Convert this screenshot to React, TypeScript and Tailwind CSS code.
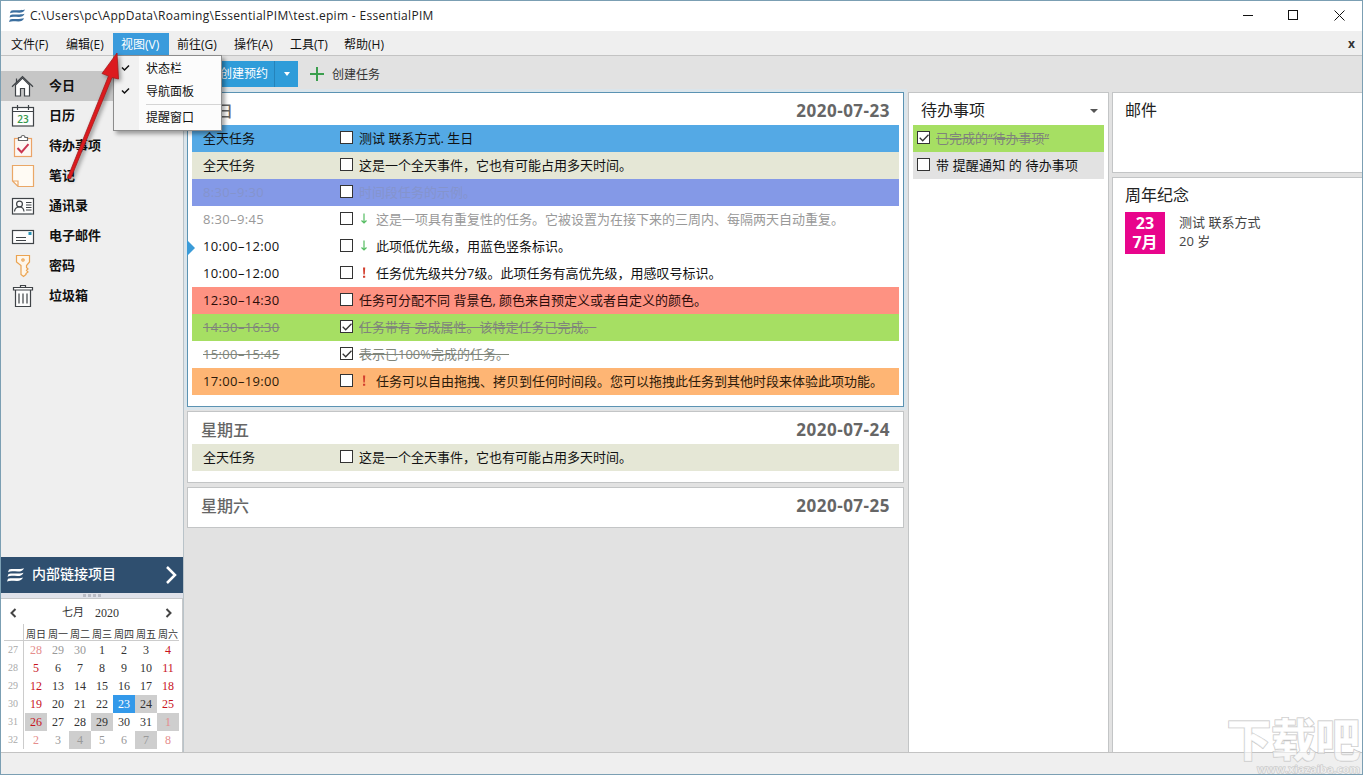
import type { ReactNode } from 'react'
import clsx from 'clsx'

type Priority = 'low' | 'high'

interface Task {
  time: string
  text: string
  bg?: string
  color?: string
  done?: boolean
  priority?: Priority
}

const todayTasks: Task[] = [
  { time: '全天任务', text: '测试 联系方式. 生日', bg: 'bg-[#54a9e5]' },
  { time: '全天任务', text: '这是一个全天事件，它也有可能占用多天时间。', bg: 'bg-[#e5e7d6]' },
  { time: '8:30–9:30', text: '时间段任务的示例。', bg: 'bg-[#8499e7]', color: 'text-[#8494cd]' },
  { time: '8:30–9:45', text: '这是一项具有重复性的任务。它被设置为在接下来的三周内、每隔两天自动重复。', color: 'text-[#999999]', priority: 'low' },
  { time: '10:00–12:00', text: '此项低优先级，用蓝色竖条标识。', priority: 'low' },
  { time: '10:00–12:00', text: '任务优先级共分7级。此项任务有高优先级，用感叹号标识。', priority: 'high' },
  { time: '12:30–14:30', text: '任务可分配不同 背景色, 颜色来自预定义或者自定义的颜色。', bg: 'bg-[#fe9282]', color: 'text-[#2c0d0a]' },
  { time: '14:30–16:30', text: '任务带有 完成属性。该特定任务已完成。', bg: 'bg-[#a6df63]', done: true },
  { time: '15:00–15:45', text: '表示已100%完成的任务。', done: true },
  { time: '17:00–19:00', text: '任务可以自由拖拽、拷贝到任何时间段。您可以拖拽此任务到其他时段来体验此项功能。', bg: 'bg-[#feb574]', color: 'text-[#2c1a0a]', priority: 'high' },
]

const fridayTasks: Task[] = [
  { time: '全天任务', text: '这是一个全天事件，它也有可能占用多天时间。', bg: 'bg-[#e5e7d6]' },
]

const menus = [
  { label: '文件(F)', width: 'w-[55px]' },
  { label: '编辑(E)', width: 'w-[55px]' },
  { label: '视图(V)', width: 'w-[56px]', active: true },
  { label: '前往(G)', width: 'w-[57px]' },
  { label: '操作(A)', width: 'w-[56px]' },
  { label: '工具(T)', width: 'w-[54px]' },
  { label: '帮助(H)', width: 'w-[56px]' },
]

const weekdays = ['周日', '周一', '周二', '周三', '周四', '周五', '周六']

const weeks = [
  { no: 27, days: [28, 29, 30, 1, 2, 3, 4] },
  { no: 28, days: [5, 6, 7, 8, 9, 10, 11] },
  { no: 29, days: [12, 13, 14, 15, 16, 17, 18] },
  { no: 30, days: [19, 20, 21, 22, 23, 24, 25] },
  { no: 31, days: [26, 27, 28, 29, 30, 31, 1] },
  { no: 32, days: [2, 3, 4, 5, 6, 7, 8] },
]

// week-day indexes of the days that hold events
const marked = ['3-5', '4-0', '4-3', '4-6', '5-2', '5-5']

function Icon({ children, color = '#3f4347' }: { children: ReactNode; color?: string }) {
  return (
    <svg width="24" height="24" viewBox="0 0 24 24" fill="none" stroke={color} strokeWidth="1.2" className="shrink-0">
      {children}
    </svg>
  )
}

const navItems: { label: string; icon: ReactNode }[] = [
  {
    label: '今日',
    icon: (
      <Icon>
        <path d="M4.500 11v11h5v-7.500h4v7.500h5V11L11.500 4z" fill="#fff" />
        <path d="M1 12.800 11.500 2.600 22 12.800" />
        <path d="M5.500 8V4.500" />
      </Icon>
    ),
  },
  {
    label: '日历',
    icon: (
      <Icon>
        <rect x="1.500" y="3.500" width="21" height="18.500" fill="#fdfdfd" />
        <path d="M1.500 7.500h21M6.500 1v5M17.500 1v5" />
        <text x="12" y="18.500" textAnchor="middle" fontSize="10" fontWeight="600" fill="#35984a" stroke="none" className="font-['Open_Sans',sans-serif]">
          23
        </text>
      </Icon>
    ),
  },
  {
    label: '待办事项',
    icon: (
      <Icon color="#eba367">
        <rect x="3.500" y="4.500" width="17" height="18" fill="#fdf8f3" />
        <path d="M7.500 6.500V3.500h2.500a2 2 0 0 1 4 0h2.500v3z" fill="#fff" stroke="#666" />
        <path d="m6.500 14 4 4.200 7-8" stroke="#ca3652" strokeWidth="2" />
      </Icon>
    ),
  },
  {
    label: '笔记',
    icon: (
      <Icon color="#eaa766">
        <path d="M1.500 1.500h21v21H7l-5.500-5.500zM1.500 17H7v5.500" fill="#fffbf4" />
      </Icon>
    ),
  },
  {
    label: '通讯录',
    icon: (
      <Icon>
        <rect x="1.500" y="4.500" width="21" height="15.500" fill="#fdfdfd" />
        <circle cx="8.500" cy="10" r="2.900" />
        <path d="M3.500 17.500c.3-3.300 2-4.500 5-4.500s4.200 1.200 4.500 4.500M15 8.500h5.500M15 11h5.500M15 13.500h5.500M15 16h5.500" />
      </Icon>
    ),
  },
  {
    label: '电子邮件',
    icon: (
      <Icon>
        <rect x="1.500" y="6.500" width="21" height="13" fill="#fdfdfd" />
        <path d="M5 13.500h10M5 16.500h10" />
        <rect x="17.500" y="8" width="3" height="3" fill="#2692b5" stroke="none" />
      </Icon>
    ),
  },
  {
    label: '密码',
    icon: (
      <Icon color="#eba350">
        <path d="M5.500 1.500h13V8L15.500 11.500v2l1.500 1.500-1.500 1.300L17 18l-2 1.500v1L12.500 22.500 10 20.500v-9L5.500 8z" fill="#fef6ea" />
        <circle cx="12" cy="6" r="1.200" />
      </Icon>
    ),
  },
  {
    label: '垃圾箱',
    icon: (
      <Icon>
        <path d="M4.500 5.500h15V22.500h-15z" fill="#fdfdfd" />
        <path d="M2.500 3.500h19v2.500h-19z" fill="#fdfdfd" />
        <path d="M9.500 3.500V1.500h5v2M8 9.500v10M12 9.500v10M16 9.500v10" />
      </Icon>
    ),
  },
]

function Check({ checked }: { checked?: boolean }) {
  return (
    <span className="mr-px flex size-[13px] shrink-0 items-center justify-center border border-[#333] bg-white">
      {checked && (
        <svg width="10" height="10" viewBox="0 0 10 10" fill="none" stroke="#333" strokeWidth="1.300">
          <path d="m.7 4.800 3 3L9.500 1.800" />
        </svg>
      )}
    </span>
  )
}

function PriorityMark({ priority }: { priority: Priority }) {
  return (
    <svg width="8" height="12" viewBox="0 0 8 12" fill="none" className="mr-[8px] ml-[6px] shrink-0">
      {priority === 'low' ? (
        <path d="M4 .5v9M1.500 7.500 4 10l2.500-2.500" stroke="#55bd62" strokeWidth="1.200" />
      ) : (
        <path d="M3 .5h2.200l-.4 7H3.400zM3 8.800h2.200v2H3z" fill="#d33f2f" />
      )}
    </svg>
  )
}

function TaskRow({ task }: { task: Task }) {
  const tone = task.done ? 'text-[#7f857b] line-through' : task.color ?? 'text-[#111]'
  const isClock = task.time.includes(':')
  return (
    <div className={clsx('flex h-[27px] items-center pb-[2px] pl-[11px] text-[13px] whitespace-nowrap', task.bg)}>
      <span className={clsx('w-[137px] shrink-0 leading-[18px]', tone, isClock && 'tracking-[0.35px]')}>{task.time}</span>
      <Check checked={task.done} />
      {task.priority ? <PriorityMark priority={task.priority} /> : <span className="w-[5px] shrink-0" />}
      <span className={clsx('leading-[18px]', tone)}>{task.text}</span>
    </div>
  )
}

function DayCard({ title, date, tasks = [], height, current }: { title: string; date: string; tasks?: Task[]; height: string; current?: boolean }) {
  return (
    <section
      className={clsx(
        'shrink-0 border bg-white px-1',
        height,
        current ? 'border-[#5b93b3] shadow-[0_0_0_3px_#dbe5eb]' : 'border-[#c3c5c6]',
      )}
    >
      <header className="flex h-8 items-center justify-between pt-1 pr-[9px] pl-[9px] text-[#666]">
        <h2 className="text-[16px] leading-5 font-medium">{title}</h2>
        <span className="text-[17px] leading-5 font-bold tracking-[0.5px]">{date}</span>
      </header>
      {tasks.map((task, i) => (
        <TaskRow key={i} task={task} />
      ))}
    </section>
  )
}

function TitleBar() {
  return (
    <div className="flex h-[30px] shrink-0 items-center bg-white pl-2">
      <Logo width={16} height={14} color="#3c6f9f" />
      <span className="ml-[5px] text-[12px] leading-4 tracking-[0.31px] text-[#222]">
        C:\Users\pc\AppData\Roaming\EssentialPIM\test.epim - EssentialPIM
      </span>
      <svg width="104" height="14" viewBox="0 0 104 14" fill="none" stroke="#111" className="mr-[15px] ml-auto">
        <path d="M0 6.500h10M91.500 1.500l10 10M101.500 1.500l-10 10" />
        <rect x="45.500" y="1.500" width="9" height="9" />
      </svg>
    </div>
  )
}

function Logo({ width, height, color }: { width: number; height: number; color: string }) {
  return (
    <svg width={width} height={height} viewBox="0 0 17 14" fill={color} className="shrink-0">
      <path d="M2 1.500C6 .2 10 1.800 17 .2 16 2.500 14 3.600 11 3.600 7 3.600 4 2.800 1 4.200z" />
      <path d="M1.500 6C5.500 4.700 10 6.300 16.500 4.700 15.500 7 13.500 8.100 10.500 8.100 6.500 8.100 3.500 7.300.5 8.700z" />
      <path d="M1 10.800C5 9.500 9.500 11.100 16 9.500 15 11.800 13 12.900 10 12.900 6 12.900 3 12.100 0 13.500z" />
    </svg>
  )
}

function MenuBar() {
  return (
    <nav className="flex h-[24px] shrink-0 items-end bg-[#efefef] pl-[2px] text-[12px] text-[#111]">
      {menus.map((menu) => (
        <span
          key={menu.label}
          className={clsx('flex h-[22px] shrink-0 items-center pt-px pl-[8px] leading-4', menu.width, menu.active && 'bg-[#3a9bdc] text-white')}
        >
          {menu.label}
        </span>
      ))}
      <span className="mr-[7px] mb-[3px] ml-auto text-[12px] leading-4 font-bold text-[#333]">x</span>
    </nav>
  )
}

function Sidebar() {
  return (
    <aside className="flex w-[182px] shrink-0 flex-col bg-[#efefef]">
      <ul className="flex-1 pt-[15px]">
        {navItems.map((item, i) => (
          <li key={item.label} className={clsx('flex h-[30px] items-center gap-[14px] pl-[10px]', i === 0 && 'bg-[#c6c6c6]')}>
            {item.icon}
            <span className="mb-[2px] text-[13px] leading-5 font-bold text-[#111]">{item.label}</span>
          </li>
        ))}
      </ul>
      <div className="flex h-[36px] items-center bg-[#2f4f6f] pr-[6px] pl-[6px] text-white">
        <Logo width={17} height={14} color="#fff" />
        <span className="mb-[2px] ml-[8px] text-[14px] leading-5 font-medium">内部链接项目</span>
        <svg width="12" height="20" viewBox="0 0 12 20" fill="none" stroke="#fff" strokeWidth="2.500" className="ml-auto">
          <path d="m2 2 8 8-8 8" />
        </svg>
      </div>
      <div className="flex h-[5px] items-center justify-center gap-[2px] bg-[#dfe2ea]">
        {[0, 1, 2, 3].map((n) => (
          <i key={n} className="size-[3px] bg-[#b9bcc6]" />
        ))}
      </div>
      <MiniCalendar />
    </aside>
  )
}

function MiniCalendar() {
  return (
    <div className="h-[154px] border-t border-r border-[#c6c8ca] bg-white text-[#333]">
      <div className="flex h-[25px] items-center pt-[2px] pr-[10px] pl-[9px] text-[11px] leading-4">
        <svg width="7" height="10" viewBox="0 0 7 10" fill="none" stroke="#444" strokeWidth="2">
          <path d="M5.500 1 1.500 5l4 4" />
        </svg>
        <span className="mb-px ml-[45px]">七月</span>
        <span className="ml-[11px] font-['Liberation_Serif',serif] text-[12px]">2020</span>
        <svg width="7" height="10" viewBox="0 0 7 10" fill="none" stroke="#444" strokeWidth="2" className="ml-auto">
          <path d="m1.500 1 4 4-4 4" />
        </svg>
      </div>
      <div className="ml-[3px] flex h-[17px] w-[175px] border-b border-[#ccc]">
        <span className="mr-px w-[20px] shrink-0 border-r border-[#ccc]" />
        {weekdays.map((d) => (
          <span key={d} className="flex w-[22px] shrink-0 items-center justify-center pt-[3px] text-[10px] leading-3 whitespace-nowrap">
            {d}
          </span>
        ))}
      </div>
      {weeks.map((week, w) => (
        <div key={week.no} className="ml-[3px] flex h-[18px] font-['Liberation_Serif',serif] text-[12px] leading-[18px]">
          <span className="mr-px w-[20px] shrink-0 border-r border-[#ccc] pr-px text-center text-[10px] text-[#aaa]">{week.no}</span>
          {week.days.map((day, d) => {
            const outside = (w === 0 && day > 20) || (w > 3 && day < 10)
            const weekend = d === 0 || d === 6
            const selected = w === 3 && d === 4
            return (
              <span
                key={d}
                className={clsx(
                  'w-[22px] shrink-0 text-center',
                  selected && 'bg-[#3399ea] text-white',
                  marked.includes(`${w}-${d}`) && 'bg-[#cecece]',
                  !selected && weekend && (outside ? 'text-[#e58d8d]' : 'text-[#c8141e]'),
                  !weekend && outside && 'text-[#999]',
                )}
              >
                {day}
              </span>
            )
          })}
        </div>
      ))}
    </div>
  )
}

function Toolbar() {
  return (
    <div className="flex h-[36px] shrink-0 items-center pl-1 text-[12px]">
      <div className="flex h-[26px] w-[107px] items-center bg-[#2f9cd9] text-white">
        <span className="ml-[29px] w-[54px] leading-4">创建预约</span>
        <span className="h-full w-px bg-[#2583ba]" />
        <i className="ml-[9px] size-0 border-x-[3px] border-t-[4px] border-x-transparent border-t-white" />
      </div>
      <svg width="14" height="14" viewBox="0 0 14 14" stroke="#3b9f4e" strokeWidth="2" className="ml-[12px]">
        <path d="M7 0v14M0 7h14" />
      </svg>
      <span className="mt-[2px] ml-[8px] leading-4 text-[#333]">创建任务</span>
    </div>
  )
}

function TodoPanel() {
  return (
    <section className="w-[201px] shrink-0 border border-b-0 border-[#c3c5c6] bg-white px-1">
      <header className="flex h-8 items-center justify-between pt-[3px] pr-[6px] pl-[8px]">
        <h2 className="mb-px text-[16px] leading-5 text-[#222]">待办事项</h2>
        <i className="size-0 border-x-4 border-t-4 border-x-transparent border-t-[#555]" />
      </header>
      <div className="flex h-[27px] items-center gap-[5px] bg-[#a6df63] pb-[2px] pl-1 text-[13px] leading-[18px]">
        <Check checked />
        <span className="text-[#7f857b] line-through">已完成的“待办事项”</span>
      </div>
      <div className="flex h-[27px] items-center gap-[5px] bg-[#e2e2e2] pb-[2px] pl-1 text-[13px] leading-[18px]">
        <Check />
        <span className="tracking-[0.15px] text-[#111]">带 提醒通知 的 待办事项</span>
      </div>
    </section>
  )
}

function RightColumn() {
  return (
    <div className="flex flex-1 flex-col gap-1">
      <section className="h-[81px] shrink-0 border border-r-0 border-[#c3c5c6] bg-white pt-[7px] pl-[12px]">
        <h2 className="text-[16px] leading-5 text-[#222]">邮件</h2>
      </section>
      <section className="flex-1 border border-r-0 border-b-0 border-[#c3c5c6] bg-white pt-[7px] pl-[12px]">
        <h2 className="text-[16px] leading-5 text-[#222]">周年纪念</h2>
        <div className="mt-[7px] flex gap-[14px]">
          <div className="flex h-[42px] w-[40px] flex-col items-center justify-center bg-[#e8058c] text-[16px] leading-[19px] font-bold text-white">
            <span>23</span>
            <span>7月</span>
          </div>
          <div className="pt-px text-[13px] leading-[19px] text-[#444]">
            <p>测试 联系方式</p>
            <p>20 岁</p>
          </div>
        </div>
      </section>
    </div>
  )
}

function ViewMenu() {
  const tick = (
    <svg width="9" height="8" viewBox="0 0 9 8" fill="none" stroke="#111" strokeWidth="1.500">
      <path d="m1 3.500 2.500 2.500L8 1.500" />
    </svg>
  )
  return (
    <div className="absolute top-[54px] left-[112px] flex h-[76px] w-[109px] border border-[#8c8c8c] bg-[#fcfcfc] text-[12px] leading-4 text-[#111] shadow-[3px_3px_4px_rgba(0,0,0,0.35)]">
      <div className="flex w-[25px] flex-col items-center gap-[15px] bg-[#f1f1f1] pt-[8px] pr-[2px]">
        {tick}
        {tick}
      </div>
      <div className="flex-1 pl-[7px]">
        <p className="mt-[5px]">状态栏</p>
        <p className="mt-[7px]">导航面板</p>
        <div className="mt-[4px] h-px bg-[#d5d5d5]" />
        <p className="mt-[5px]">提醒窗口</p>
      </div>
    </div>
  )
}

function Watermark() {
  return (
    <div className="absolute right-[2px] bottom-0 flex h-[57px] w-[134px] flex-col items-end text-white/60 [-webkit-text-stroke:1px_#c4c4c4] [paint-order:stroke_fill]">
      <span className="text-[45px] leading-[46px] font-black tracking-[-0.5px]">下载吧</span>
      <span className="text-[11px] leading-[11px] font-bold">www.xiazaiba.com</span>
    </div>
  )
}

export default function App() {
  return (
    <div className="relative flex h-[775px] w-[1363px] flex-col overflow-hidden border border-[#7b9fb3] bg-[#e2e2e2] font-['Open_Sans','Noto_Sans_CJK_SC',sans-serif]">
      <TitleBar />
      <MenuBar />
      <div className="flex min-h-0 flex-1 border-t border-[#c3c3c3]">
        <Sidebar />
        <div className="flex flex-1 flex-col border-l border-[#b9c3c9] pl-[3px]">
          <Toolbar />
          <div className="flex min-h-0 flex-1">
            <main className="relative mr-1 flex w-[717px] shrink-0 flex-col gap-1">
              <DayCard title="今日" date="2020-07-23" tasks={todayTasks} height="h-[315px]" current />
              <DayCard title="星期五" date="2020-07-24" tasks={fridayTasks} height="h-[72px]" />
              <DayCard title="星期六" date="2020-07-25" height="h-[41px]" />
              <i className="absolute top-[148px] left-0 size-0 border-y-[8px] border-l-[8px] border-y-transparent border-l-[#3a9bd8]" />
            </main>
            <TodoPanel />
            <div className="w-[3px] shrink-0" />
            <RightColumn />
          </div>
        </div>
      </div>
      <footer className="h-[22px] shrink-0 border-t border-[#c3c3c3] bg-[#efefef]" />
      <ViewMenu />
      <Watermark />
      <svg width="70" height="135" viewBox="0 0 70 135" className="pointer-events-none absolute top-[50px] left-[60px] drop-shadow-[2px_2px_2px_rgba(0,0,0,0.4)]">
        <path d="M6.500 127 47.500 25 41 22.500 56 2 57.500 28 51 26.500 9.500 128z" fill="#dc1a1e" stroke="#a51a1c" strokeWidth="0.800" />
      </svg>
    </div>
  )
}
